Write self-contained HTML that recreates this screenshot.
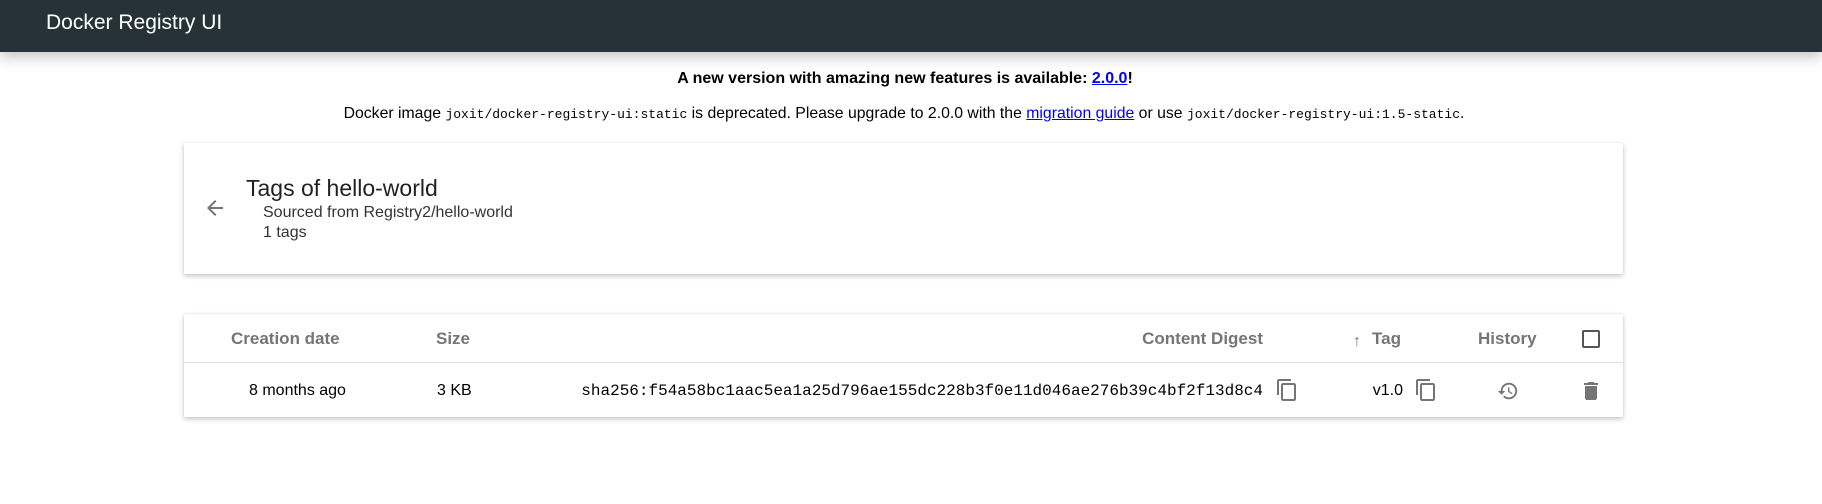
<!DOCTYPE html>
<html><head><meta charset="utf-8"><style>
*{box-sizing:border-box;margin:0;padding:0}
body{width:1822px;height:504px;background:#fff;font-family:"Liberation Sans",Arial,sans-serif;color:#000;position:relative;overflow:hidden}
.hdr{position:absolute;left:0;top:0;width:1822px;height:52px;background:#263238;box-shadow:0 4px 14px rgba(0,0,0,.25)}
.hdr span{position:absolute;left:46px;top:11px;color:#fff;font-size:21px}
.ab{position:absolute;white-space:nowrap}
.c{left:0;width:1822px;text-align:center;font-size:16px}
code{font-family:"Liberation Mono",monospace;font-size:13px}
a{color:#00e;text-decoration:underline}
.card{position:absolute;background:#fff;box-shadow:0 2px 5px rgba(0,0,0,.22),0 0 2px rgba(0,0,0,.08)}
.th{font-size:17px;font-weight:bold;color:#757575;top:329px}
.td{font-size:16px;top:382px}
</style></head><body>
<div class="hdr"><span>Docker Registry UI</span></div>
<div class="ab c" style="top:70px;left:-6px;font-weight:bold">A new version with amazing new features is available: <a>2.0.0</a>!</div>
<div class="ab c" style="top:105px;left:-7px;font-size:15.8px">Docker image <code>joxit/docker-registry-ui:static</code> is deprecated. Please upgrade to 2.0.0 with the <a>migration guide</a> or use <code>joxit/docker-registry-ui:1.5-static</code>.</div>
<div class="card" style="left:184px;top:143px;width:1439px;height:131px"></div>
<svg class="ab" style="left:203px;top:196px" width="24" height="24" viewBox="0 0 24 24"><path d="M20 11H7.83l5.59-5.59L12 4l-8 8 8 8 1.41-1.41L7.83 13H20v-2z" fill="#757575"/></svg>
<div class="ab" style="left:246px;top:175px;font-size:23px;color:#222">Tags of hello-world</div>
<div class="ab" style="left:263px;top:204px;font-size:16px;color:#333">Sourced from Registry2/hello-world</div>
<div class="ab" style="left:263px;top:224px;font-size:16px;color:#333">1 tags</div>
<div class="card" style="left:184px;top:314px;width:1439px;height:103px"></div>
<div class="ab" style="left:184px;top:362px;width:1439px;height:1px;background:#e0e0e0"></div>
<div class="ab th" style="left:231px">Creation date</div>
<div class="ab th" style="left:436px">Size</div>
<div class="ab th" style="right:559px">Content Digest</div>
<div class="ab" style="left:1353px;top:333px;color:#757575;font-size:16px">↑</div>
<div class="ab th" style="left:1372px">Tag</div>
<div class="ab th" style="left:1478px">History</div>
<div class="ab" style="left:1582px;top:330px;width:18px;height:18px;border:2px solid #555;border-radius:2px"></div>
<div class="ab td" style="left:249px">8 months ago</div>
<div class="ab td" style="left:437px">3 KB</div>
<div class="ab td" style="right:559px;font-family:'Liberation Mono',monospace">sha256:f54a58bc1aac5ea1a25d796ae155dc228b3f0e11d046ae276b39c4bf2f13d8c4</div>
<svg class="ab" style="left:1275px;top:378px" width="24" height="24" viewBox="0 0 24 24"><path d="M16 1H4c-1.1 0-2 .9-2 2v14h2V3h12V1zm3 4H8c-1.1 0-2 .9-2 2v14c0 1.1.9 2 2 2h11c1.1 0 2-.9 2-2V7c0-1.1-.9-2-2-2zm0 16H8V7h11v14z" fill="#757575"/></svg>
<div class="ab td" style="right:419px">v1.0</div>
<svg class="ab" style="left:1414px;top:378px" width="24" height="24" viewBox="0 0 24 24"><path d="M16 1H4c-1.1 0-2 .9-2 2v14h2V3h12V1zm3 4H8c-1.1 0-2 .9-2 2v14c0 1.1.9 2 2 2h11c1.1 0 2-.9 2-2V7c0-1.1-.9-2-2-2zm0 16H8V7h11v14z" fill="#757575"/></svg>
<svg class="ab" style="left:1497px;top:380px" width="22" height="22" viewBox="0 0 24 24"><path d="M13 3a9 9 0 0 0-9 9H1l3.89 3.89.07.14L9 12H6c0-3.870 3.13-7 7-7s7 3.13 7 7-3.13 7-7 7c-1.93 0-3.68-.79-4.94-2.06l-1.42 1.42A8.95 8.95 0 0 0 13 21a9 9 0 0 0 0-18zm-1 5v5l4.280 2.54.72-1.21-3.5-2.08V8H12z" fill="#757575"/></svg>
<svg class="ab" style="left:1579px;top:379px" width="24" height="24" viewBox="0 0 24 24"><path d="M6 19c0 1.1.9 2 2 2h8c1.1 0 2-.9 2-2V7H6v12zM19 4h-3.5l-1-1h-5l-1 1H5v2h14V4z" fill="#757575"/></svg>
</body></html>
